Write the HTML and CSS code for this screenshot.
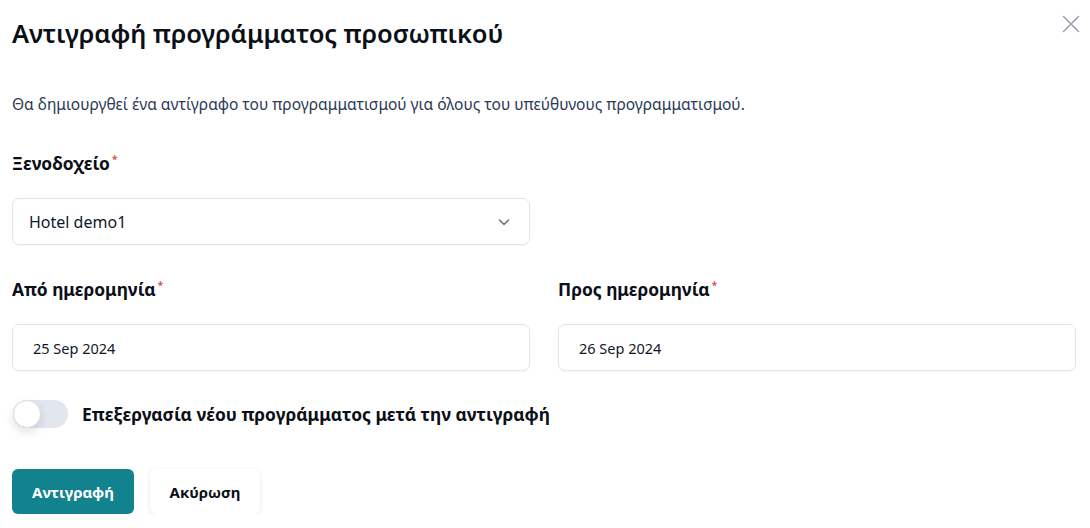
FILE: index.html
```html
<!DOCTYPE html>
<html lang="el">
<head>
<meta charset="utf-8">
<link rel="stylesheet" href="styles.css">
</head>
<body>
<div class="dialog">
  <div class="header">
    <h1 class="title">Αντιγραφή προγράμματος προσωπικού</h1>
    <button class="close" aria-label="close">
      <svg width="18" height="18" viewBox="0 0 18 18"><path d="M1.5 1.5L16.5 16.5M16.5 1.5L1.5 16.5" stroke="#9aa1ad" stroke-width="1.6" stroke-linecap="round"/></svg>
    </button>
  </div>
  <p class="desc">Θα δημιουργθεί ένα αντίγραφο του προγραμματισμού για όλους του υπεύθυνους προγραμματισμού.</p>

  <div class="field half">
    <label class="label">Ξενοδοχείο<span class="req">*</span></label>
    <div class="input select">
      <span>Hotel demo1</span>
      <svg width="14" height="14" viewBox="0 0 14 14"><path d="M2.5 5L7 9.5L11.5 5" fill="none" stroke="#6b7280" stroke-width="1.6" stroke-linecap="round" stroke-linejoin="round"/></svg>
    </div>
  </div>

  <div class="row">
    <div class="field">
      <label class="label">Από ημερομηνία<span class="req">*</span></label>
      <div class="input date">25 Sep 2024</div>
    </div>
    <div class="field">
      <label class="label">Προς ημερομηνία<span class="req">*</span></label>
      <div class="input date">26 Sep 2024</div>
    </div>
  </div>

  <div class="toggle-row">
    <span class="toggle"><span class="knob"></span></span>
    <span class="toggle-label">Επεξεργασία νέου προγράμματος μετά την αντιγραφή</span>
  </div>

  <div class="actions">
    <button class="btn primary">Αντιγραφή</button>
    <button class="btn secondary">Ακύρωση</button>
  </div>
</div>
</body>
</html>
```
FILE: styles.css
```css
* { box-sizing: border-box; }
html, body { margin: 0; padding: 0; background: #fff; }
body { font-family: "Noto Sans", "Open Sans", sans-serif; color: #111827; }
.dialog { padding: 0 14px 0 12px; width: 1090px; }
.header { display: flex; justify-content: space-between; align-items: flex-start; height: 70px; }
.title { margin: 16px 0 0; font-size: 25.5px; font-weight: 600; line-height: 34px; color: #0b0f17; letter-spacing: -0.1px; }
.close { border: 0; background: none; padding: 0; margin: 15px -4px 0 0; width: 18px; height: 18px; cursor: pointer; }
.desc { margin: 24px 0 0; font-size: 15.5px; line-height: 20px; color: #2b3a55; }
.field { display: flex; flex-direction: column; }
.half { width: 518px; margin-top: 38px; }
.label { font-size: 17.4px; font-weight: 700; line-height: 22px; color: #0b0f17; margin-bottom: 24px; }
.req { color: #e05252; font-size: 10px; vertical-align: top; position: relative; top: -4px; margin-left: 2px; }
.input { height: 47px; border: 1px solid #e3e4e7; border-radius: 7px; display: flex; align-items: center; font-size: 14px; color: #111827; box-shadow: 0 1px 1px rgba(0,0,0,0.03); }
.select { justify-content: space-between; padding: 0 18px 0 16px; font-size: 16px; }
.date { padding: 0 20px; height: 47px; font-size: 14.5px; }
.row { display: grid; grid-template-columns: 1fr 1fr; column-gap: 28px; margin-top: 33px; }
.toggle-row { display: flex; align-items: center; gap: 14px; margin-top: 29px; margin-left: 1px; }
.toggle { width: 55px; height: 28px; border-radius: 14px; background: #e2e6ef; position: relative; display: inline-block; }
.knob { position: absolute; left: 0; top: 0; width: 28px; height: 28px; border-radius: 50%; background: #fff; border: 1px solid #d9deea; box-shadow: 0 4px 10px rgba(0,0,0,0.12); }
.toggle-label { font-size: 17.4px; font-weight: 700; color: #0b0f17; }
.actions { display: flex; gap: 16px; margin-top: 41px; }
.btn { font-family: inherit; font-size: 15px; font-weight: 700; height: 45px; border-radius: 6px; border: 0; cursor: pointer; }
.primary { background: #12838e; color: #fff; width: 122px; }
.secondary { background: #fff; color: #0b0f17; width: 110px; box-shadow: 0 1px 4px rgba(0,0,0,0.12); }
```
